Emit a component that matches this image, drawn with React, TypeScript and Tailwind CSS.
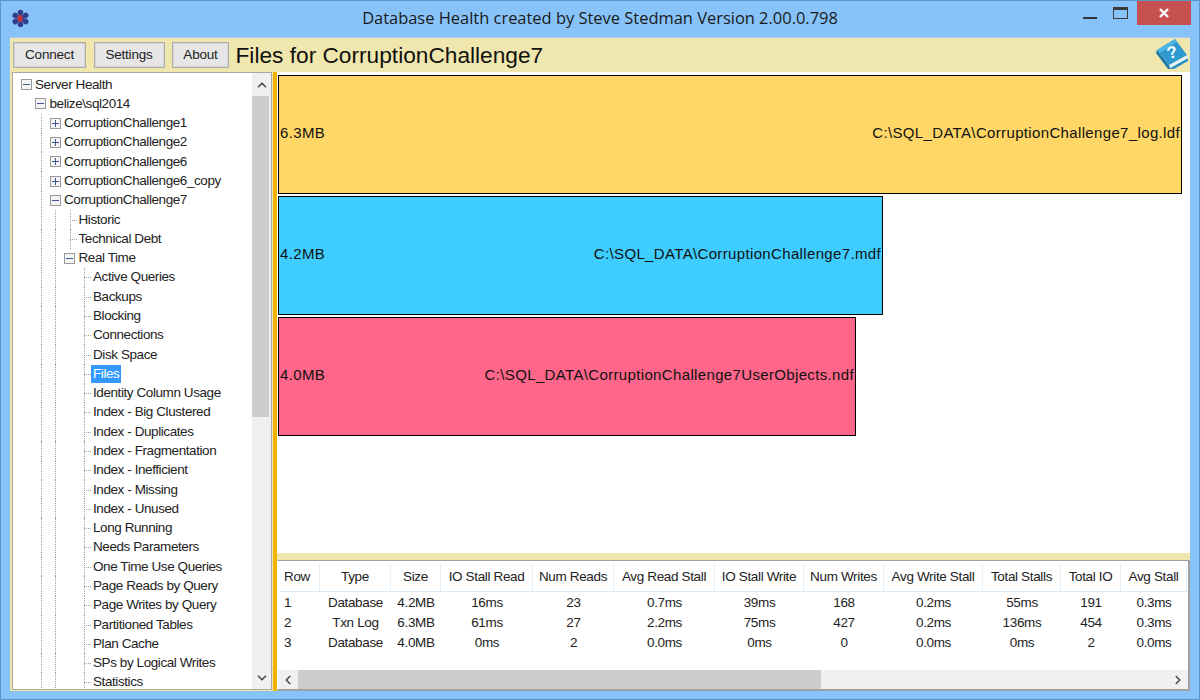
import { ChevronLeft, ChevronRight, ChevronUp, ChevronDown } from "lucide-react";

type Cell = "empty" | "guide" | "tee" | "plus" | "minus";

const uiFont = "font-['Liberation_Sans',sans-serif]";

const treeRows: { label: string; cells: Cell[]; selected?: boolean }[] = [
  { label: "Server Health", cells: ["minus"] },
  { label: "belize\\sql2014", cells: ["empty", "minus"] },
  { label: "CorruptionChallenge1", cells: ["empty", "guide", "plus"] },
  { label: "CorruptionChallenge2", cells: ["empty", "guide", "plus"] },
  { label: "CorruptionChallenge6", cells: ["empty", "guide", "plus"] },
  { label: "CorruptionChallenge6_copy", cells: ["empty", "guide", "plus"] },
  { label: "CorruptionChallenge7", cells: ["empty", "guide", "minus"] },
  { label: "Historic", cells: ["empty", "guide", "guide", "tee"] },
  { label: "Technical Debt", cells: ["empty", "guide", "guide", "tee"] },
  { label: "Real Time", cells: ["empty", "guide", "guide", "minus"] },
  ...[
    "Active Queries",
    "Backups",
    "Blocking",
    "Connections",
    "Disk Space",
    "Files",
    "Identity Column Usage",
    "Index - Big Clustered",
    "Index - Duplicates",
    "Index - Fragmentation",
    "Index - Inefficient",
    "Index - Missing",
    "Index - Unused",
    "Long Running",
    "Needs Parameters",
    "One Time Use Queries",
    "Page Reads by Query",
    "Page Writes by Query",
    "Partitioned Tables",
    "Plan Cache",
    "SPs by Logical Writes",
    "Statistics",
  ].map((label) => ({
    label,
    cells: ["empty", "guide", "guide", "empty", "tee"] as Cell[],
    selected: label === "Files",
  })),
];

const headers = [
  "Row",
  "Type",
  "Size",
  "IO Stall Read",
  "Num Reads",
  "Avg Read Stall",
  "IO Stall Write",
  "Num Writes",
  "Avg Write Stall",
  "Total Stalls",
  "Total IO",
  "Avg Stall",
];

const rows = [
  ["1", "Database", "4.2MB", "16ms", "23", "0.7ms", "39ms", "168", "0.2ms", "55ms", "191", "0.3ms"],
  ["2", "Txn Log", "6.3MB", "61ms", "27", "2.2ms", "75ms", "427", "0.2ms", "136ms", "454", "0.3ms"],
  ["3", "Database", "4.0MB", "0ms", "2", "0.0ms", "0ms", "0", "0.0ms", "0ms", "2", "0.0ms"],
];

const gridCols =
  "grid grid-cols-[40px_71px_50px_92px_81px_101px_89px_80px_99px_78px_60px_66px]";

function AppIcon() {
  return (
    <svg width="19" height="19" viewBox="0 0 22 22">
      {[0, 60, 120, 180, 240, 300].map((a) => (
        <circle key={a} cx="11" cy="4" r="3.2" fill="#2f3f8f" transform={`rotate(${a} 11 11)`} />
      ))}
      <circle cx="11" cy="11" r="4.6" fill="#3a3f90" />
      <ellipse cx="10.5" cy="11" rx="3" ry="4" fill="#c0343c" />
    </svg>
  );
}

function HelpBook() {
  return (
    <svg width="36" height="34" viewBox="0 0 36 34">
      <path d="M16 30 L34 20 L34 23 L20 31 Z" fill="#2b8fc4" />
      <path d="M15 27 L33 17 L34 20 L16 30 Z" fill="#e4f2fa" />
      <path d="M3 12 L2 15 L14 31 L20 31 L16 30 L15 27 Z" fill="#1f79ab" />
      <path d="M3 12 L21 1 L33 17 L15 27 Z" fill="#2f9ad0" />
      <path d="M3 12 L21 1 L23 4 L6 15 Z" fill="#4fb6e4" />
      <text x="18" y="20" fontSize="17" fontWeight="700" fill="#ffffff" textAnchor="middle" transform="rotate(-15 18 14)" fontFamily="Liberation Sans, sans-serif">
        ?
      </text>
    </svg>
  );
}

function ExpandBox({ open }: { open: boolean }) {
  return (
    <span className="relative z-10 flex h-[11px] w-[11px] items-center justify-center border border-[#9a9a9a] bg-[#f4f4f4]">
      <span className="absolute h-px w-[7px] bg-[#3c5a8c]" />
      {!open && <span className="absolute h-[7px] w-px bg-[#3c5a8c]" />}
    </span>
  );
}

function TreeCell({ kind, last }: { kind: Cell; last: boolean }) {
  return (
    <span className="relative flex h-full w-[14.5px] shrink-0 items-center justify-center">
      {(kind === "guide" || kind === "tee") && (
        <span className="absolute bottom-0 left-[7px] top-0 border-l border-dotted border-[#a0a0a0]" />
      )}
      {kind === "tee" && last && (
        <span className="absolute left-[7px] top-1/2 w-[7px] border-t border-dotted border-[#a0a0a0]" />
      )}
      {(kind === "plus" || kind === "minus") && <ExpandBox open={kind === "minus"} />}
    </span>
  );
}

function TreeView() {
  return (
    <div className="ml-[2px] flex h-[618px] w-[260px] shrink-0 overflow-hidden border border-[#a9a9a0] bg-white">
      <div className="min-w-0 flex-1 overflow-hidden pl-[6px] pt-[2px]">
        {treeRows.map((r) => (
          <div key={r.label} className="flex h-[19.29px] items-center">
            {r.cells.map((c, i) => (
              <TreeCell key={i} kind={c} last={i === r.cells.length - 1} />
            ))}
            <span
              className={
                "whitespace-nowrap text-[13.5px] leading-[18px] tracking-[-0.42px] " +
                (r.selected ? "-ml-[0.5px] bg-[#3399ff] px-[2px] text-white" : "ml-[1.5px] text-[#222]")
              }
            >
              {r.label}
            </span>
          </div>
        ))}
      </div>
      <div className="flex w-[19px] shrink-0 flex-col bg-[#f0f0f0]">
        <div className="flex h-[23px] items-center justify-center">
          <ChevronUp size={14} strokeWidth={3} className="text-[#505050]" />
        </div>
        <div className="h-[321px] w-[17px] bg-[#cdcdcd]" />
        <div className="flex-1" />
        <div className="flex h-[22px] items-center justify-center">
          <ChevronDown size={14} strokeWidth={3} className="text-[#505050]" />
        </div>
      </div>
    </div>
  );
}

function FileBar({ size, path, width, color }: { size: string; path: string; width: string; color: string }) {
  return (
    <div className={`flex h-[119px] items-center justify-between border border-black pb-[3px] pl-[1px] pr-[1px] text-[15px] tracking-[0.35px] text-[#111] ${width} ${color}`}>
      <span>{size}</span>
      <span>{path}</span>
    </div>
  );
}

function Btn({ label, width }: { label: string; width: string }) {
  return (
    <button className={`h-[26px] border border-[#adadad] bg-[#e6e6e6] text-[13.5px] tracking-[-0.2px] text-[#222] shadow-[inset_0_0_0_1px_#d4d4d4] ${width}`}>
      {label}
    </button>
  );
}

export default function App() {
  return (
    <div className={`flex h-[700px] w-[1200px] flex-col overflow-hidden border border-[#5f93c4] bg-[#87c3f9] ${uiFont}`}>
      {/* title bar */}
      <div className="relative flex h-[36px] shrink-0 items-center justify-center">
        <div className="absolute left-[10px] top-[8px]">
          <AppIcon />
        </div>
        <span className="-mt-[1px] font-['Open_Sans',sans-serif] text-[16.45px] text-[#1a1a1a]">
          Database Health created by Steve Stedman Version 2.00.0.798
        </span>
        <div className="absolute right-[8px] top-0 flex items-start">
          <div className="mr-[16px] mt-[16px] h-[2px] w-[14px] bg-[#333]" />
          <div className="mr-[9px] mt-[6px] h-[12px] w-[15px] border border-[#3a3a3a] border-t-[3px]" />
          <div className="flex h-[24px] w-[54px] items-center justify-center bg-[#c75050] text-white">
            <svg width="10" height="10" viewBox="0 0 10 10">
              <path d="M1 1 L9 9 M9 1 L1 9" stroke="#fff" strokeWidth="2.4" />
            </svg>
          </div>
        </div>
      </div>

      {/* window body */}
      <div className="mx-[9px] flex h-[654px] shrink-0 flex-col border-t border-[#a8cce8] bg-[#efe7ae]">
        <div className="flex h-[34px] shrink-0 items-center gap-[7.5px] pl-[3px]">
          <Btn label="Connect" width="w-[73px]" />
          <Btn label="Settings" width="w-[71px]" />
          <Btn label="About" width="w-[57px]" />
          <span className="-ml-[1px] text-[22.7px] leading-none text-[#111]">Files for CorruptionChallenge7</span>
          <div className="ml-auto">
            <HelpBook />
          </div>
        </div>

        <div className="flex h-[619px]">
          <TreeView />
          <div className="ml-[1px] w-[4px] shrink-0 bg-[#f2b200]" />
          <div className="flex min-w-0 flex-1 flex-col">
            {/* chart */}
            <div className="flex h-[481px] shrink-0 flex-col gap-[2px] bg-white pl-px pt-[3px]">
              <FileBar size="6.3MB" path="C:\SQL_DATA\CorruptionChallenge7_log.ldf" width="w-[904px]" color="bg-[#ffd767]" />
              <FileBar size="4.2MB" path="C:\SQL_DATA\CorruptionChallenge7.mdf" width="w-[605px]" color="bg-[#3fcdff]" />
              <FileBar size="4.0MB" path="C:\SQL_DATA\CorruptionChallenge7UserObjects.ndf" width="w-[578px]" color="bg-[#ff6689]" />
            </div>
            <div className="h-[7px] shrink-0 bg-[#efe7ae]" />
            {/* grid */}
            <div className="flex min-h-0 flex-1 flex-col border-b-2 border-l border-r-2 border-t border-[#a0a0a0] border-l-white bg-white">
              <div className="flex-1 pl-[2px] pt-[3px] text-[13.5px] tracking-[-0.35px] text-[#222]">
                <div className={`${gridCols} h-[28px] border-b border-[#dcebf5]`}>
                  {headers.map((h, i) => (
                    <div key={h} className={"flex items-center border-r border-[#e6f0f8] " + (i === 0 ? "pl-[4px]" : "justify-center")}>
                      {h}
                    </div>
                  ))}
                </div>
                <div className="pt-[1px]">
                  {rows.map((row) => (
                    <div key={row[0]} className={`${gridCols} h-[20px]`}>
                      {row.map((v, i) => (
                        <div key={i} className={"flex items-center " + (i === 0 ? "pl-[4px]" : "justify-center")}>
                          {v}
                        </div>
                      ))}
                    </div>
                  ))}
                </div>
              </div>
              <div className="flex h-[19px] shrink-0 items-center bg-[#f0f0f0]">
                <div className="flex w-[20px] justify-center">
                  <ChevronLeft size={14} strokeWidth={3} className="text-[#505050]" />
                </div>
                <div className="h-full w-[523px] bg-[#cdcdcd]" />
                <div className="flex-1" />
                <div className="flex w-[20px] justify-center">
                  <ChevronRight size={14} strokeWidth={3} className="text-[#505050]" />
                </div>
              </div>
            </div>
          </div>
        </div>
      </div>
    </div>
  );
}
